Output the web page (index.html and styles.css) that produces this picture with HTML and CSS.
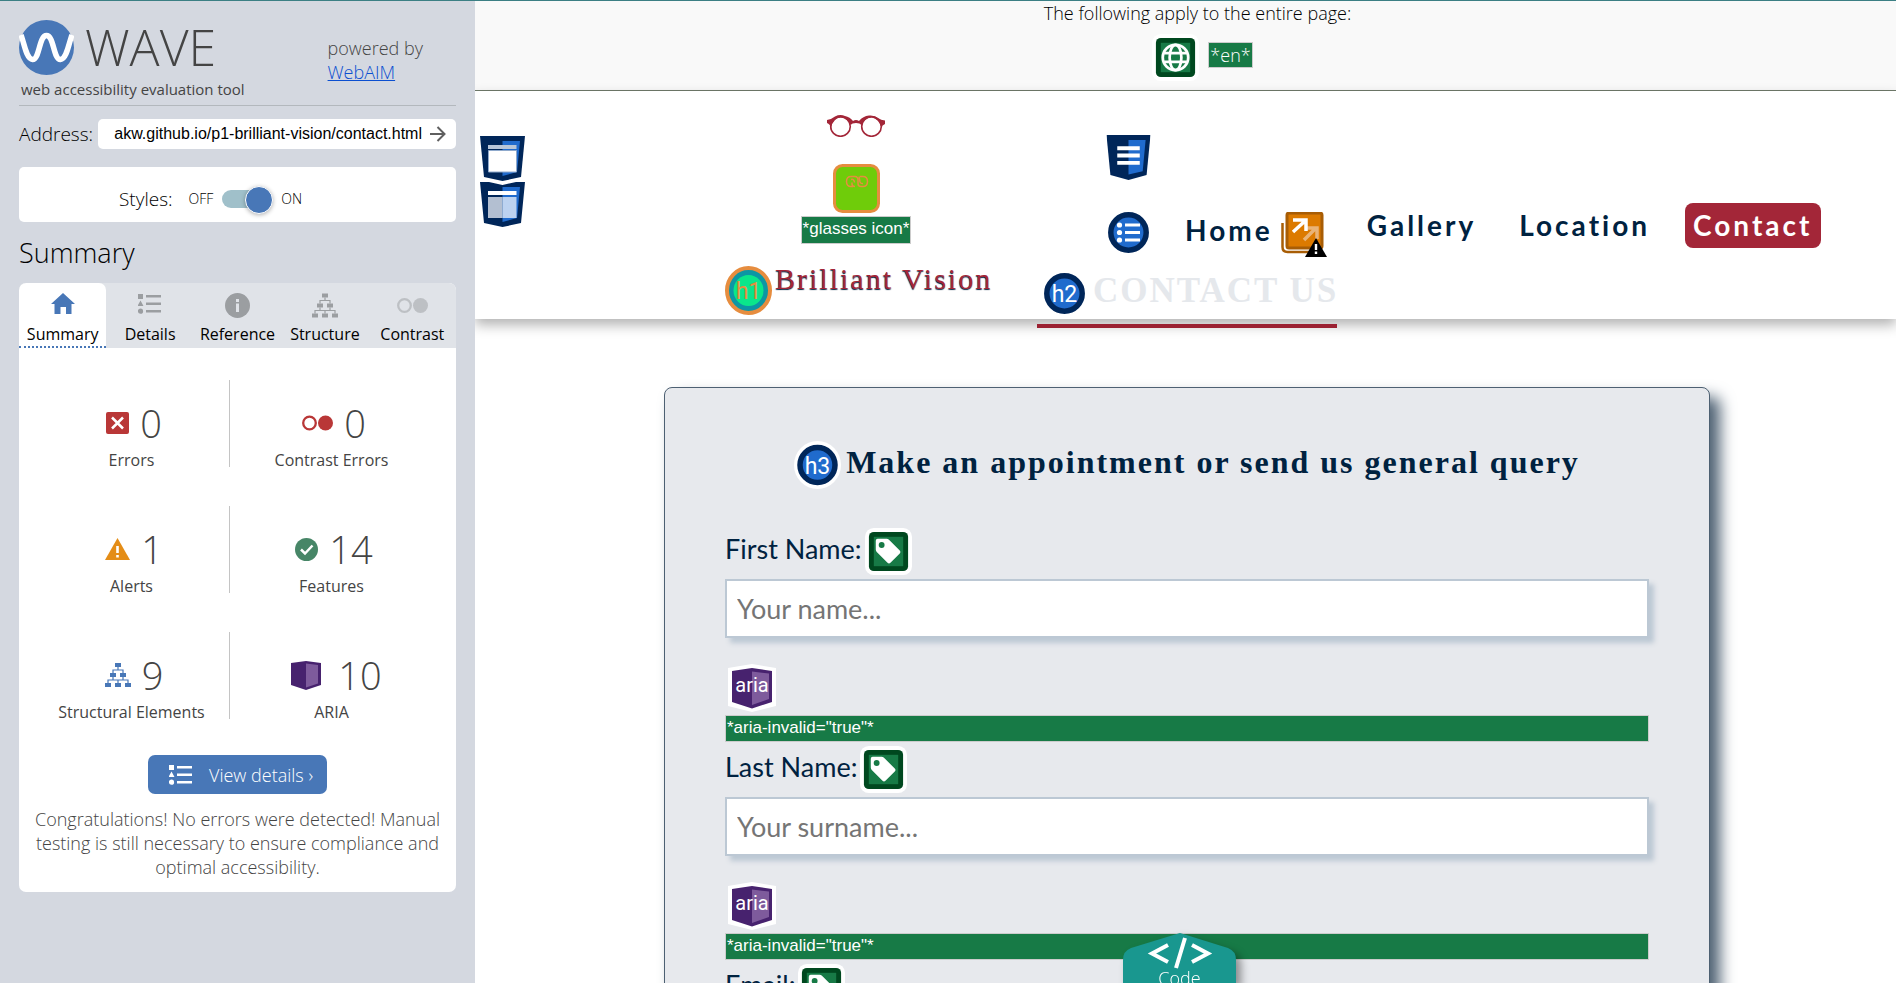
FILE: index.html
```html
<!DOCTYPE html>
<html lang="en">
<head>
<meta charset="utf-8">
<title>WAVE Report of Brilliant Vision</title>
<link rel="stylesheet" href="styles.css">
</head>
<body>
<svg class="defs" aria-hidden="true">
  <symbol id="list" viewBox="0 0 24 22"><path d="M0 1h5v5H0zM2.500 7.500l3 5.500h-6zM8 2h15v2.500H8zM8 9.500h15V12H8zM8 17h15v2.500H8z"/><circle cx="2.500" cy="18.200" r="2.600"/></symbol>
  <symbol id="tree" viewBox="0 0 26 24"><path d="M10 0h6v4h-6zM5 10h6v4H5zM15 10h6v4h-6zM0 20h6v4H0zM10 20h6v4h-6zM20 20h6v4h-6z"/><path fill="none" stroke="currentColor" stroke-width="1.200" d="M13 4v3M8 10V7h10v3M8 14v3M18 14v3M3 20v-3h20v3M13 17v3"/></symbol>
  <symbol id="dots" viewBox="0 0 31 16"><circle cx="7.500" cy="8" r="6.300" fill="none" stroke="currentColor" stroke-width="2.300"/><circle cx="23.500" cy="8" r="7.500"/></symbol>
  <symbol id="tag" viewBox="0 0 48 48"><rect width="48" height="48" rx="9" fill="#fff"/><rect x="4" y="4" width="40" height="40" rx="5" fill="#00481f"/><rect x="9" y="9" width="30" height="30" fill="#177a46"/><path fill="#fff" d="M13 11h9q1.500 0 2.500 1l11 11q1.500 1.500 0 3l-9.500 9.500q-1.500 1.500-3 0L12 24.500q-1-1-1-2.500v-9q0-2 2-2z"/><circle cx="17" cy="17.300" r="3" fill="#177a46"/></symbol>
  <symbol id="aria" viewBox="0 0 48 48"><path fill="#fff" d="M0 4l24-4 24 4v38l-24 6L0 42z"/><path fill="#47226e" d="M4 7l20-3 20 3v31l-20 6.500L4 38z"/><path fill="#7e5b9c" d="M24 7.500l17 2V35l-17 6z"/></symbol>
  <symbol id="shield" viewBox="0 0 45 46"><path fill="#002659" d="M0 0h45l-4 41-18.500 5L4 41z"/><path fill="#206bcd" d="M22.500 5H40l-3 32-14.500 3.500z"/></symbol>
</svg>

<div class="app">
  <aside class="sidebar">
    <header class="brandbar">
      <div>
        <div class="wave">
          <svg class="wave-mark" viewBox="0 0 55 55"><circle cx="27.500" cy="27.500" r="27.500" fill="#4877b7"/><path fill="none" stroke="#fff" stroke-width="5.500" d="M2 15C5 22 7 39 13.500 39.500C20.500 40 20 15.500 27.500 15.500C35 15.500 34.500 40 41.500 39.500C48 39 50 22 53 15"/></svg>
          <span class="wave-name">WAVE</span>
        </div>
        <div class="tagline">web accessibility evaluation tool</div>
      </div>
      <div class="powered">powered by<br><a href="#">WebAIM</a></div>
    </header>
    <form class="address">
      <label for="url">Address:</label>
      <div class="address-box">
        <input id="url" type="text" value="akw.github.io/p1-brilliant-vision/contact.html">
        <button type="button" aria-label="Go"><svg width="16" height="16" viewBox="0 0 16 16"><path fill="none" stroke="#5f5f5f" stroke-width="2" d="M0 8h14M7.500 1l7 7-7 7"/></svg></button>
      </div>
    </form>
    <div class="styles-card">
      <label for="styles">Styles:</label>
      <span class="small">OFF</span>
      <input id="styles" class="switch" type="checkbox" checked>
      <span class="small">ON</span>
    </div>
    <h2 class="side-title">Summary</h2>
    <section class="panel">
      <nav class="tabs">
        <button class="tab active" type="button"><svg class="home" width="24" height="25" viewBox="0 0 24 25"><path fill="currentColor" d="M12 0l12 11h-3.500v10H15v-7H9.500v7h-6V11H0z"/></svg>Summary</button>
        <button class="tab" type="button"><svg width="24" height="25" viewBox="0 0 24 25"><use href="#list" y="0" width="24" height="22"/></svg>Details</button>
        <button class="tab" type="button"><svg width="25" height="25" viewBox="0 0 25 25"><circle cx="12.500" cy="12.500" r="12.500"/><path fill="#e0e3e8" d="M11 6h3v3h-3zM11 10.500h3V19h-3z"/></svg>Reference</button>
        <button class="tab" type="button"><svg width="26" height="25"><use href="#tree"/></svg>Structure</button>
        <button class="tab faint" type="button"><svg width="31" height="25"><use href="#dots"/></svg>Contrast</button>
      </nav>
      <div class="stats">
        <div class="stat"><div class="num"><svg width="23" height="22" viewBox="0 0 23 22"><rect width="23" height="22" rx="2" fill="#b93737"/><path stroke="#fff" stroke-width="2.500" d="M6 5.500l11 11M17 5.500l-11 11"/></svg>0</div><div class="name">Errors</div></div>
        <div class="stat"><div class="num"><svg class="red" width="31" height="16"><use href="#dots"/></svg>0</div><div class="name">Contrast Errors</div></div>
        <div class="stat"><div class="num"><svg width="25" height="22" viewBox="0 0 25 22"><path fill="#e48d17" d="M12.500 0L25 22H0z"/><path fill="#fff" d="M11.200 8h2.600v7h-2.600zM11.200 17h2.600v2.500h-2.600z"/></svg>1</div><div class="name">Alerts</div></div>
        <div class="stat"><div class="num"><svg width="23" height="23" viewBox="0 0 23 23"><circle cx="11.500" cy="11.500" r="11.500" fill="#478667"/><path fill="none" stroke="#fff" stroke-width="2.500" d="M6 11.500l4 4 7.500-8"/></svg>14</div><div class="name">Features</div></div>
        <div class="stat"><div class="num"><svg class="blue" width="26" height="24"><use href="#tree"/></svg>9</div><div class="name">Structural Elements</div></div>
        <div class="stat"><div class="num wide"><svg width="30" height="29" viewBox="0 0 30 29"><path fill="#47226e" d="M0 2l15-2 15 2v22l-15 5-15-5z"/><path fill="#7e5b9c" d="M15 2.500l12 1.500v18.500L15 26.500z"/></svg>10</div><div class="name">ARIA</div></div>
      </div>
      <button class="details" type="button"><svg width="24" height="22"><use href="#list"/></svg>View details ›</button>
      <p class="congrats">Congratulations! No errors were detected! Manual testing is still necessary to ensure compliance and optimal accessibility.</p>
    </section>
  </aside>

  <main class="page">
    <div class="notice">
      <div>The following apply to the entire page:</div>
      <div class="notice-row">
        <svg width="47" height="47" viewBox="0 0 48 48"><rect width="48" height="48" rx="9" fill="#fff"/><rect x="4" y="4" width="40" height="40" rx="5" fill="#00481f"/><rect x="9" y="9" width="30" height="30" fill="#177a46"/><g fill="none" stroke="#fff" stroke-width="2.800"><circle cx="24" cy="24" r="13"/><ellipse cx="24" cy="24" rx="6" ry="13"/><path d="M12.500 19.500h23M12.500 28.500h23"/></g></svg>
        <span class="flag">*en*</span>
      </div>
    </div>

    <header class="site-header">
      <div class="landmarks">
        <svg width="45" height="45" viewBox="0 0 45 45"><path fill="#002659" d="M0 0h45l-4 41-18.500 4L4 41z"/><path fill="#206bcd" d="M22.500 5H40l-3 31-14.500 4z"/><path fill="#b8c6d8" d="M8 9h28.500v4H8z"/><path fill="#fff" stroke="#8fa9cc" d="M8.500 14.500h28V36h-28z"/></svg>
        <svg width="45" height="45" viewBox="0 0 45 45"><path fill="#002659" d="M0 0h9l13.500 3L36 0h9l-4 41-18.500 4L4 41z"/><path fill="#206bcd" d="M22.500 5H40l-3 31-14.500 4z"/><path fill="#fff" d="M8 9h28.500v4H8z"/><path fill="#b3bfd1" d="M8 15h14.500v21H8z"/><path fill="#bcd2f0" d="M22.500 15h14v21h-14z"/></svg>
      </div>
      <div class="brand">
        <a class="brand-mark" href="#">
          <svg width="58" height="22" viewBox="0 0 58 22"><g fill="none" stroke="#a32638" stroke-width="1.600"><circle cx="13.500" cy="11.500" r="9.800"/><circle cx="44.500" cy="11.500" r="9.800"/></g><path fill="#a32638" d="M0 5Q5 4 8 1.500Q13-1 18 1Q23 2 26 6Q29 4 32 6Q36 1 42 .5Q48 0 51 3Q54 5 58 5.500V9Q55 10 54.500 13Q52 4 45 2.500Q37 2.500 34.500 10Q33 8 29 8Q25 8 23.500 10Q21 3 14 2.500Q6 3 4 13Q3 9 0 8z"/></svg>
          <svg width="47" height="49" viewBox="0 0 47 49"><rect x="1.500" y="1.500" width="44" height="46" rx="8" fill="#6fcc0a" stroke="#e68d3f" stroke-width="3"/><path fill="none" stroke="#e68d3f" stroke-width="1.500" d="M20 22.500h-2q-4.500 0-4.500-5t4.500-5h4q3 0 3 4v3q0 3 3 3h2q4.500 0 4.500-5t-4.500-5h-3M22 22.500q-3.500 0-3-4M18 15.500q3-1 3.500 3M26 12.500l1 5.500q1 2 3 1.500"/></svg>
          <span class="flag">*glasses icon*</span>
        </a>
        <h1 class="brand-title">
          <svg width="47" height="49" viewBox="0 0 47 49"><ellipse cx="23.500" cy="24.500" rx="21.500" ry="22.500" fill="#0c96a4" stroke="#e68d3f" stroke-width="4"/><ellipse cx="23.500" cy="24.500" rx="15" ry="15.500" fill="#0ae68b"/><text x="23.500" y="33" text-anchor="middle" class="h-word" fill="#e68d3f">h1</text></svg>
          <span>Brilliant Vision</span>
        </h1>
      </div>
      <nav class="site-nav">
        <svg class="nav-landmark" width="45" height="45" viewBox="0 0 45 46"><use href="#shield" width="45" height="46"/><path stroke="#fff" stroke-width="4" d="M11 13.500h23M11 21h23M11 28.500h23"/></svg>
        <div class="nav-row">
          <svg width="41" height="41" viewBox="0 0 41 41"><circle cx="20.500" cy="20.500" r="17.700" fill="#206bcd" stroke="#002659" stroke-width="5.500"/><g fill="#fff"><circle cx="11.500" cy="13" r="2.600"/><circle cx="11.500" cy="20.500" r="2.600"/><circle cx="11.500" cy="28" r="2.600"/><path d="M17 11.500h15v3H17zM17 19h15v3H17zM17 26.500h15v3H17z"/></g></svg>
          <ul>
            <li><a class="with-icon" href="#">Home<svg width="46" height="45" viewBox="0 0 46 45"><path fill="none" stroke="#a85d05" stroke-width="2.500" d="M1.500 11v24q0 5 5 5h25"/><rect x="6" y="1" width="35" height="35" rx="2" fill="#dc7a00" stroke="#a85d05" stroke-width="3"/><path fill="none" stroke="#e9b377" stroke-width="3.500" d="M23 28l11-11M24 16h12v11"/><path fill="none" stroke="#fff" stroke-width="3.500" d="M12 20l12-11M12 8h13v11"/><path fill="#000" d="M35 26l11 19H24z"/><path fill="#fff" d="M33.800 32h2.400v6h-2.400zM33.800 39.500h2.400v2.500h-2.400z"/></svg></a></li>
            <li><a href="#">Gallery</a></li>
            <li><a href="#">Location</a></li>
            <li><a class="current" href="#">Contact</a></li>
          </ul>
        </div>
      </nav>
    </header>

    <h2 class="page-title">
      <svg width="41" height="41" viewBox="0 0 41 41"><circle cx="20.500" cy="20.500" r="17.700" fill="#206bcd" stroke="#002659" stroke-width="5.500"/><text x="20.500" y="29" text-anchor="middle" class="h-word" fill="#fff">h2</text></svg>
      <span>CONTACT US</span>
    </h2>

    <form class="card">
      <h3 class="card-title">
        <svg width="47" height="48" viewBox="0 0 47 48"><ellipse cx="23.500" cy="24" rx="23.500" ry="24" fill="#fff"/><circle cx="23.500" cy="24" r="17.500" fill="#206bcd" stroke="#002659" stroke-width="5.500"/><text x="23.500" y="33" text-anchor="middle" class="h-word" fill="#fff">h3</text></svg>
        <span>Make an appointment or send us general query</span>
      </h3>
      <div class="field">
        <div class="field-label"><label for="first">First Name:</label><svg width="47" height="47"><use href="#tag"/></svg></div>
        <input id="first" type="text" placeholder="Your name...">
        <svg class="aria-icon" width="48" height="48"><use href="#aria"/><text x="24" y="28" text-anchor="middle" class="aria-word" fill="#fff">aria</text></svg>
        <div class="flag">*aria-invalid="true"*</div>
      </div>
      <div class="field">
        <div class="field-label"><label for="last">Last Name:</label><svg width="47" height="47"><use href="#tag"/></svg></div>
        <input id="last" type="text" placeholder="Your surname...">
        <svg class="aria-icon" width="48" height="48"><use href="#aria"/><text x="24" y="28" text-anchor="middle" class="aria-word" fill="#fff">aria</text></svg>
        <div class="flag">*aria-invalid="true"*</div>
      </div>
      <div class="field">
        <div class="field-label"><label for="email">Email:</label><svg width="47" height="47"><use href="#tag"/></svg></div>
        <input id="email" type="email" placeholder="Your email...">
      </div>
    </form>

    <button class="code-tab" type="button">
      <svg class="code-shape" viewBox="0 0 113 50" width="113" height="50"><path fill="#19978f" d="M57 0l48 15q8 3 8 12v23H0V27q0-9 8-12z"/><path fill="none" stroke="#fff" stroke-width="4" d="M45 12L29 20.500 45 29M69 12l16 8.500L69 29M62 5l-9 30"/></svg>
      <span>Code</span>
    </button>
  </main>
</div>
</body>
</html>
```
FILE: styles.css
```css
* { box-sizing: border-box; }

body {
  margin: 0;
  font-family: "Open Sans", "Noto Sans", sans-serif;
  font-size: 18px;
  font-weight: 350;
  line-height: 24px;
  color: #000;
  background: #fff;
}

h1, h2, h3, p, ul { margin: 0; padding: 0; font-weight: inherit; }
ul { list-style: none; }
svg { flex: none; display: block; }
button { font: inherit; border: 0; padding: 0; cursor: pointer; }
.defs { position: absolute; width: 0; height: 0; }

.app {
  display: grid;
  grid-template-columns: 475px 1fr;
  height: 100vh;
  overflow: hidden;
  border-top: 1px solid #3b7f84;
}

/* sidebar */
.sidebar { background: #d4d8e0; padding: 19px 19px 0; }

.brandbar {
  display: flex;
  justify-content: space-between;
  padding: 0 33px 6px 0;
  border-bottom: 1px solid #b3b8bd;
  color: #444;
}
.wave { display: flex; align-items: center; gap: 11px; height: 55px; }
.wave-mark { width: 55px; height: 55px; }
.wave-name { font-size: 50px; font-weight: 300; line-height: 55px; }
.tagline { font-size: 15px; font-weight: 400; line-height: 20px; margin-top: 4px; padding-left: 2px; }
.powered { padding-top: 16px; }
.powered a { color: #0b4fd0; }

.address { display: flex; align-items: center; gap: 5px; margin: 13px 0 18px; }
.address label, .styles-card label { font-size: 19px; }
.address-box {
  flex: 1;
  min-width: 0;
  display: flex;
  align-items: center;
  height: 30px;
  padding: 0 10px 0 6px;
  border-radius: 5px;
  background: #fff;
}
.address-box input {
  flex: 1;
  min-width: 0;
  border: 0;
  padding: 0;
  font: 16px "Liberation Sans", Arial, sans-serif;
  text-align: right;
  background: transparent;
}
.address-box button { background: transparent; margin-left: 8px; }

.styles-card {
  display: flex;
  align-items: center;
  gap: 9px;
  height: 55px;
  padding: 8px 0 0 100px;
  border-radius: 5px;
  background: #fff;
}
.styles-card label { margin-right: 7px; }
.small { font-size: 14px; }
.switch {
  appearance: none;
  position: relative;
  width: 50px;
  height: 18px;
  margin: 0;
  border-radius: 9px;
  background: #a0c0ca;
}
.switch::before {
  content: "";
  position: absolute;
  top: -4px;
  right: -1px;
  width: 26px;
  height: 26px;
  border-radius: 50%;
  border: 1px solid #fff;
  background: #4877b7;
  box-shadow: 0 1px 4px rgba(0, 0, 0, .3);
}

.side-title { font-size: 27px; line-height: 32px; margin: 15px 0 14px; }

.panel { border-radius: 7px; background: #fff; overflow: hidden; padding-bottom: 13px; }
.tabs { display: grid; grid-template-columns: repeat(5, 1fr); background: #e0e3e8; }
.tab {
  display: flex;
  flex-direction: column;
  align-items: center;
  gap: 6px;
  height: 65px;
  padding-top: 10px;
  font-size: 16px;
  font-weight: 400;
  line-height: 20px;
  color: #000;
  background: transparent;
}
.tab svg { fill: #9b9ea1; color: #9b9ea1; }
.tab.active { background: #fff; border-radius: 7px 7px 0 0; border-bottom: 2px dotted #4877b7; }
.tab.active svg { color: #4877b7; }
.tab.faint svg { fill: #bdc0c4; color: #bdc0c4; }

.stats {
  display: grid;
  grid-template-columns: 196fr 203fr;
  row-gap: 39px;
  padding: 32px 23px 0 15px;
  color: #444;
}
.stat { padding-top: 22px; text-align: center; }
.stat:nth-child(odd) { border-right: 1px solid #c4c4c4; }
.num { display: flex; justify-content: center; align-items: center; gap: 11px; padding-left: 5px; font-size: 38px; line-height: 42px; }
.num.wide { gap: 17px; padding-left: 10px; }
.name { margin-top: 9px; font-size: 16px; font-weight: 400; line-height: 14px; }
.red { fill: #b93737; color: #b93737; }
.blue { fill: #4877b7; color: #4877b7; }

.details {
  display: flex;
  align-items: center;
  gap: 16px;
  height: 39px;
  margin: 36px auto 13px;
  padding: 0 14px 0 21px;
  border-radius: 7px;
  color: #fff;
  background: #4877b7;
}
.details svg { fill: #fff; }
.congrats { padding: 0 8px; text-align: center; color: #444; }

/* evaluated page */
.page { position: relative; min-width: 0; overflow: hidden; }

.notice {
  height: 90px;
  padding-left: 24px;
  text-align: center;
  background: #f9f9f9;
  border-bottom: 1px solid #6f7a6a;
}
.notice-row { display: flex; justify-content: center; gap: 9px; padding: 9px 0 0 10px; }
.flag {
  padding: 0 1px;
  border: 1px solid #ccc;
  color: #fff;
  background: #177a46;
}
.notice .flag { height: 26px; margin-top: 8px; }

.site-header {
  display: grid;
  grid-template-columns: 250fr 381fr 790fr;
  height: 228px;
  background: #fff;
  box-shadow: 0 6px 12px rgba(0, 0, 0, .3);
}
.landmarks { display: grid; gap: 1px; align-content: start; padding: 45px 0 0 5px; }

.brand { padding-top: 24px; }
.brand-mark { display: flex; flex-direction: column; align-items: center; width: 262px; text-decoration: none; }
.brand-mark svg + svg { margin: 27px 0 3px; }
.brand-mark .flag { height: 28px; font: 17px/24px "Liberation Sans", Arial, sans-serif; }
.brand-title {
  display: flex;
  gap: 3px;
  margin-top: 22px;
  font: 30px/46px "Liberation Serif", serif;
  letter-spacing: 2px;
  color: #a32638;
  text-shadow: 0 1px 1px #002240;
  white-space: nowrap;
}
.brand-title span { line-height: 26px; }
.h-word { font: 23px Roboto, sans-serif; letter-spacing: 0; text-shadow: none; }
.aria-word { font: 20px Roboto, sans-serif; }

.site-nav { padding-top: 44px; }
.nav-row { display: flex; align-items: flex-start; gap: 28px; margin-top: 23px; }
.nav-row > svg { margin: 9px 0 0 2px; }
.nav-row ul { display: flex; gap: 27px; font: bold 28px/44px Lato, sans-serif; letter-spacing: 3px; }
.nav-row a { display: flex; height: 45px; padding: 0 8px; border-radius: 8px; color: #002240; text-decoration: none; }
.nav-row a.with-icon { gap: 8px; padding: 5px 5px 0 8px; }
.nav-row a.with-icon svg { margin-top: 4px; }
.nav-row a.current { color: #fff; background: #a32638; }

.page-title {
  position: relative;
  display: flex;
  gap: 8px;
  width: 300px;
  height: 60px;
  margin: -51px auto 59px 562px;
  padding: 5px 0 0 7px;
  border-bottom: 4px solid #9b2132;
  font: bold 35px/36px "Liberation Serif", serif;
  letter-spacing: 2px;
  color: #e5e8ec;
  white-space: nowrap;
}

.card {
  margin: 0 186px 0 189px;
  padding: 53px 60px;
  border: 1px solid #4d6072;
  border-radius: 8px;
  background: #e7e9ed;
  box-shadow: 10px 10px 15px #4d6072;
}
.card-title {
  display: flex;
  justify-content: center;
  gap: 5px;
  margin-bottom: 39px;
  font: bold 32px/42px "Liberation Serif", serif;
  letter-spacing: 2px;
  color: #002240;
  white-space: nowrap;
}
.field-label { display: flex; gap: 3px; color: #002240; font: 27px/42px Lato, sans-serif; }
.field input {
  display: block;
  width: 100%;
  height: 59px;
  margin-top: 4px;
  padding: 0 10px;
  border: 2px solid #bcc8d4;
  box-shadow: 5px 5px 5px #bcc8d4;
  font: 27px Lato, sans-serif;
}
.field input::placeholder { color: #757575; }
.aria-icon { margin: 26px 0 3px 3px; }
.field .flag { height: 27px; margin-bottom: 4px; font: 17px/24px "Liberation Sans", Arial, sans-serif; }

.code-tab {
  position: absolute;
  left: 648px;
  bottom: 0;
  width: 113px;
  height: 50px;
  overflow: hidden;
  color: #fff;
  background: transparent;
  filter: drop-shadow(5px 5px 4px rgba(0, 0, 0, .4));
}
.code-tab span { position: absolute; left: 0; right: 0; top: 33px; }
```
